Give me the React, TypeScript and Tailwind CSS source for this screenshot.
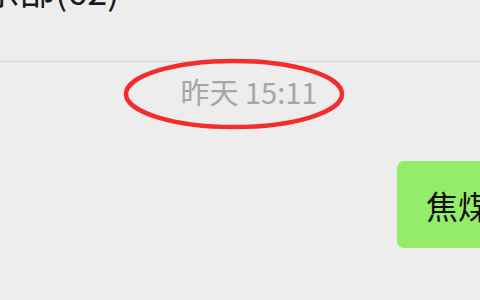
export default function App() {
  return (
    <div
      className="w-[480px] h-[300px] overflow-hidden bg-[#ededed] flex flex-col"
      style={{ fontFamily: '"Noto Sans CJK SC", "Noto Sans", sans-serif' }}
    >
      {/* chat title, cut off by the top edge */}
      <div className="h-[62px] shrink-0 border-b border-[#d6d6d6]">
        <div className="-mt-[29px] -ml-[53px] text-[36px] leading-[36px] text-[#191919] whitespace-nowrap">
          俱乐部(62)
        </div>
      </div>

      {/* timestamp with red marker circle */}
      <div className="flex justify-center pt-[11px] pl-[18px]">
        <div className="relative">
          <span className="text-[29px] leading-[36px] text-[#a6a6a6]">昨天 15:11</span>
          <svg
            className="absolute -left-[60px] -top-[16px] pointer-events-none"
            width="226"
            height="74"
            viewBox="0 0 226 74"
          >
            <ellipse cx="113" cy="37" rx="108" ry="33" fill="none" stroke="#f42c2c" strokeWidth="4.5" />
          </svg>
        </div>
      </div>

      {/* my message bubble */}
      <div className="flex justify-end pt-[52px]">
        <div className="-mr-[40px] h-[87px] w-[123px] shrink-0 rounded-[7px] bg-[#95ec69] pl-[29px] flex items-center">
          <span className="text-[32px] leading-[40px] text-[#111] whitespace-nowrap">焦煤</span>
        </div>
      </div>
    </div>
  );
}
